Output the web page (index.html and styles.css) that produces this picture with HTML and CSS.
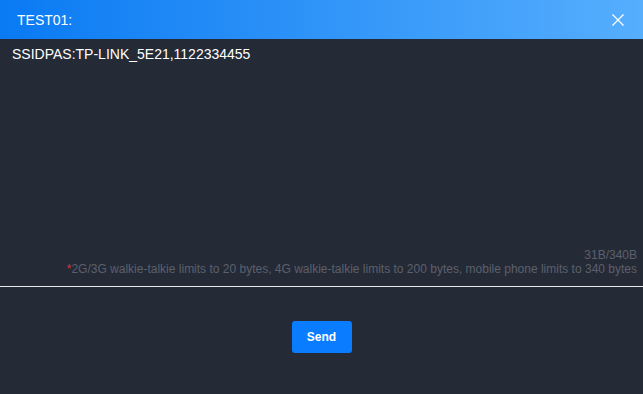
FILE: index.html
```html
<!DOCTYPE html>
<html>
<head>
<meta charset="utf-8">
<link rel="stylesheet" href="styles.css">
</head>
<body>
<div class="dialog">
  <div class="header">
    <span class="title">TEST01:</span>
    <svg class="close" width="14" height="14" viewBox="0 0 14 14"><path d="M1.5 1.5L12.5 12.5M12.5 1.5L1.5 12.5" stroke="#fff" stroke-width="1.3" fill="none"/></svg>
  </div>
  <div class="content">
    <div class="message">SSIDPAS:TP-LINK_5E21,1122334455</div>
    <div class="meta">
      <div class="count">31B/340B</div>
      <div class="hint"><span class="star">*</span>2G/3G walkie-talkie limits to 20 bytes, 4G walkie-talkie limits to 200 bytes, mobile phone limits to 340 bytes</div>
    </div>
  </div>
  <div class="footer">
    <button class="send">Send</button>
  </div>
</div>
</body>
</html>
```
FILE: styles.css
```css
html, body {
  margin: 0;
  padding: 0;
  background: #252a37;
  font-family: "Liberation Sans", Arial, sans-serif;
}
.dialog {
  width: 643px;
  height: 394px;
  display: flex;
  flex-direction: column;
  background: #252a37;
}
.header {
  height: 39px;
  flex: none;
  background: linear-gradient(90deg, #0a7af3 0%, #56aefd 100%);
  display: flex;
  align-items: center;
  justify-content: space-between;
  padding: 0 18px 0 17px;
  color: #fff;
}
.title {
  font-size: 14px;
}
.close {
  display: block;
}
.content {
  height: 248px;
  flex: none;
  display: flex;
  flex-direction: column;
  justify-content: space-between;
  border-bottom: 1px solid #e6e8ee;
  box-sizing: border-box;
  padding: 7px 6px 10px 12px;
}
.message {
  color: #fff;
  font-size: 14px;
  line-height: 16px;
}
.meta {
  text-align: right;
  font-size: 12px;
  line-height: 14px;
  color: #5b606c;
}
.star {
  color: #e0303a;
}
.footer {
  flex: 1;
  display: flex;
  justify-content: center;
  padding-top: 34px;
}
.send {
  width: 60px;
  height: 32px;
  border: none;
  border-radius: 3px;
  background: #0a7cff;
  color: #fff;
  font-family: "Liberation Sans", Arial, sans-serif;
  font-weight: bold;
  font-size: 12px;
  padding: 0;
}
```
